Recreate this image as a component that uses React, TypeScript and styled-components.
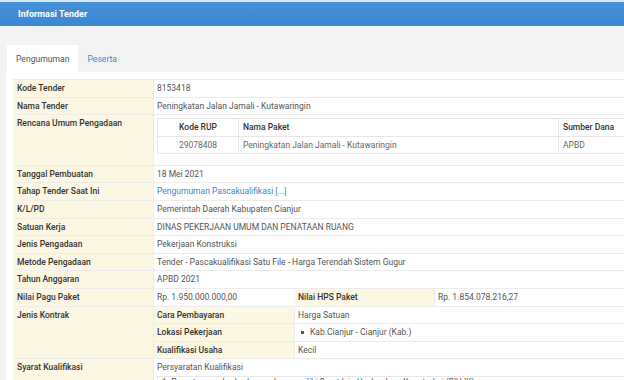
import React from "react";
import styled, { createGlobalStyle } from "styled-components";

const Global = createGlobalStyle`
  html, body { margin: 0; padding: 0; }
  body {
    background: #f3f3f3;
    font-family: Roboto, "Noto Sans", "Liberation Sans", sans-serif;
    overflow: hidden;
    width: 624px;
    height: 380px;
  }
`;

const Page = styled.div`
  width: 624px;
  height: 380px;
  overflow: hidden;
`;

const Header = styled.div`
  height: 24px;
  border-top: 2px solid #d7e6f5;
  background: linear-gradient(#4590d8, #3a87d2);
  display: flex;
  align-items: center;
  padding-left: 18px;
  color: #fff;
  font-size: 9px;
  font-weight: 700;
`;

const Body = styled.div`
  padding: 19px 0 0 6px;
  width: 660px;
`;

const Tabs = styled.div`
  display: flex;
  height: 27px;
  padding-left: 1px;
`;

const Tab = styled.div<{ $active?: boolean }>`
  display: flex;
  align-items: center;
  padding: 0 9px;
  font-size: 8.6px;
  color: ${(p) => (p.$active ? "#555" : "#3d8bd0")};
  background: ${(p) => (p.$active ? "#fff" : "transparent")};
`;

const Panel = styled.div`
  background: #fff;
  padding: 7px 0 0 7px;
`;

const Table = styled.div`
  font-size: 8.5px;
  color: #555;
  border-bottom: 1px solid #ececec;
`;

const Row = styled.div`
  display: grid;
  grid-template-columns: 141px 1fr;
  border-top: 1px solid #ececec;
`;

const Label = styled.div`
  background: #fcf7e3;
  color: #333;
  font-weight: 500;
  padding: 0 4px;
  line-height: 16.6px;
  border-right: 1px solid #ececec;
`;

const Value = styled.div`
  padding: 0 3px;
  line-height: 16.6px;
  background: #fff;
`;

const Link = styled.span`
  color: #3a87c8;
`;

const Bare = styled.div<{ $pad?: string }>`
  padding: ${(p) => p.$pad || "0"};
  background: #fff;
`;

const SubGrid = styled.div<{ $cols: string }>`
  display: grid;
  grid-template-columns: ${(p) => p.$cols};
`;

const SubLabel = styled.div<{ $top?: boolean }>`
  background: #fcf7e3;
  color: #333;
  font-weight: 500;
  padding: 0 3px;
  line-height: 16.6px;
  border-top: ${(p) => (p.$top ? "none" : "1px solid #ececec")};
  border-right: 1px solid #ececec;
`;

const SubValue = styled.div<{ $top?: boolean }>`
  padding: 0 3px;
  line-height: 16.6px;
  border-top: ${(p) => (p.$top ? "none" : "1px solid #ececec")};
`;

const RupTable = styled.div`
  display: grid;
  grid-template-columns: 81px 320px 1fr;
  border: 1px solid #e6e6e6;
  border-right: none;
`;

const RupCell = styled.div<{ $head?: boolean; $center?: boolean; $last?: boolean }>`
  line-height: 16.6px;
  padding: 0 ${(p) => (p.$center ? "0" : "4px")};
  text-align: ${(p) => (p.$center ? "center" : "left")};
  color: ${(p) => (p.$head ? "#333" : "#666")};
  font-weight: ${(p) => (p.$head ? 500 : 400)};
  border-top: ${(p) => (p.$head ? "none" : "1px solid #e6e6e6")};
  border-right: ${(p) => (p.$last ? "none" : "1px solid #e6e6e6")};
`;

const Bullet = styled.span`
  display: inline-block;
  width: 3px;
  height: 3px;
  background: #555;
  margin: 0 6px 1px 3px;
  vertical-align: middle;
`;

const SyaratBox = styled.div`
  border: 1px solid #e6e6e6;
  border-right: none;
  margin: 0 0 0 3px;
  padding: 0 4px;
  line-height: 10px;
`;

const simpleRows: [string, React.ReactNode][] = [
  ["Tanggal Pembuatan", "18 Mei 2021"],
  ["Tahap Tender Saat Ini", <Link>Pengumuman Pascakualifikasi [...]</Link>],
  ["K/L/PD", "Pemerintah Daerah Kabupaten Cianjur"],
  ["Satuan Kerja", "DINAS PEKERJAAN UMUM DAN PENATAAN RUANG"],
  ["Jenis Pengadaan", "Pekerjaan Konstruksi"],
  ["Metode Pengadaan", "Tender - Pascakualifikasi Satu File - Harga Terendah Sistem Gugur"],
  ["Tahun Anggaran", "APBD 2021"],
];

export default function App() {
  return (
    <Page>
      <Global />
      <Header>Informasi Tender</Header>
      <Body>
        <Tabs>
          <Tab $active>Pengumuman</Tab>
          <Tab>Peserta</Tab>
        </Tabs>
        <Panel>
          <Table>
            <Row>
              <Label>Kode Tender</Label>
              <Value>8153418</Value>
            </Row>
            <Row>
              <Label>Nama Tender</Label>
              <Value>Peningkatan Jalan Jamali - Kutawaringin</Value>
            </Row>
            <Row>
              <Label>Rencana Umum Pengadaan</Label>
              <Bare $pad="3px 0 10.4px 3px">
                <RupTable>
                  <RupCell $head $center>Kode RUP</RupCell>
                  <RupCell $head>Nama Paket</RupCell>
                  <RupCell $head $last>Sumber Dana</RupCell>
                  <RupCell $center>29078408</RupCell>
                  <RupCell>Peningkatan Jalan Jamali - Kutawaringin</RupCell>
                  <RupCell $last>APBD</RupCell>
                </RupTable>
              </Bare>
            </Row>
            {simpleRows.map(([l, v]) => (
              <Row key={l}>
                <Label>{l}</Label>
                <Value>{v}</Value>
              </Row>
            ))}
            <Row>
              <Label>Nilai Pagu Paket</Label>
              <SubGrid $cols="141px 140px 1fr">
                <SubValue $top>Rp. 1.950.000.000,00</SubValue>
                <SubLabel $top>Nilai HPS Paket</SubLabel>
                <SubValue $top>Rp. 1.854.078.216,27</SubValue>
              </SubGrid>
            </Row>
            <Row>
              <Label>Jenis Kontrak</Label>
              <SubGrid $cols="141px 1fr">
                <SubLabel $top>Cara Pembayaran</SubLabel>
                <SubValue $top>Harga Satuan</SubValue>
                <SubLabel>Lokasi Pekerjaan</SubLabel>
                <SubValue>
                  <Bullet />Kab.Cianjur - Cianjur (Kab.)
                </SubValue>
                <SubLabel>Kualifikasi Usaha</SubLabel>
                <SubValue>Kecil</SubValue>
              </SubGrid>
            </Row>
            <Row>
              <Label>Syarat Kualifikasi</Label>
              <Bare>
                <Value>Persyaratan Kualifikasi</Value>
                <SyaratBox>
                  1. Peserta yang berbadan usaha memiliki Surat Izin Usaha Jasa Konstruksi (SIUJK)
                </SyaratBox>
              </Bare>
            </Row>
          </Table>
        </Panel>
      </Body>
    </Page>
  );
}
